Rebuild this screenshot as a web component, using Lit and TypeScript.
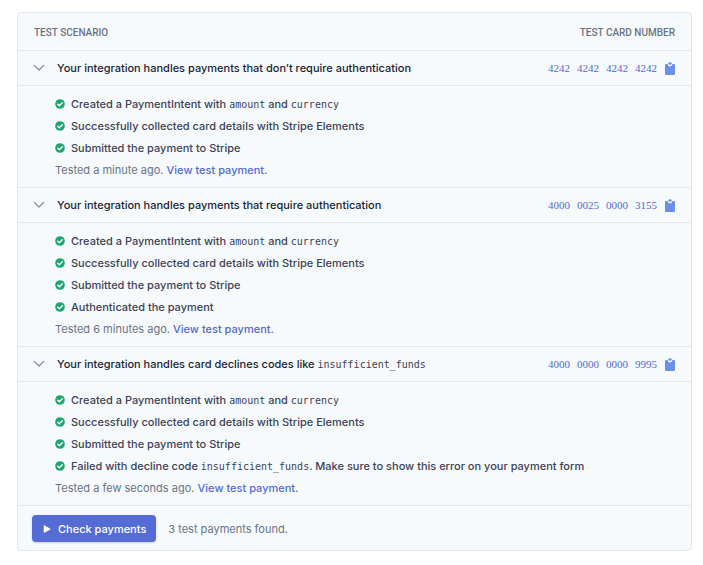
import { LitElement, html, css, svg, nothing, type TemplateResult } from "lit";
import { customElement, state } from "lit/decorators.js";

interface Scenario {
  title: TemplateResult;
  card: string;
  steps: TemplateResult[];
  tested: string;
}

const created = html`Created a PaymentIntent with <code>amount</code> and <code>currency</code>`;
const collected = html`Successfully collected card details with Stripe Elements`;
const submitted = html`Submitted the payment to Stripe`;

const scenarios: Scenario[] = [
  {
    title: html`Your integration handles payments that don’t require authentication`,
    card: "4242 4242 4242 4242",
    steps: [created, collected, submitted],
    tested: "Tested a minute ago.",
  },
  {
    title: html`Your integration handles payments that require authentication`,
    card: "4000 0025 0000 3155",
    steps: [created, collected, submitted, html`Authenticated the payment`],
    tested: "Tested 6 minutes ago.",
  },
  {
    title: html`Your integration handles card declines codes like <code>insufficient_funds</code>`,
    card: "4000 0000 0000 9995",
    steps: [
      created,
      collected,
      submitted,
      html`Failed with decline code <code>insufficient_funds</code>. Make sure to show this error on your payment form`,
    ],
    tested: "Tested a few seconds ago.",
  },
];

const icon = (cls: string, w: number, h: number, body: unknown) =>
  html`<svg class=${cls} width=${w} height=${h} viewBox="0 0 ${w} ${h}" aria-hidden="true">${body}</svg>`;

const chevron = (cls: string) =>
  icon(cls, 12, 8, svg`<path d="M1.5 1.5 6 6l4.5-4.5" fill="none" stroke="#8792a2" stroke-width="1.4" stroke-linecap="round" stroke-linejoin="round"/>`);
const check = icon("check", 10, 10, svg`<circle cx="5" cy="5" r="4.8" fill="#1ea672"/><path d="M2.8 5.2 4.4 6.7 7.3 3.7" fill="none" stroke="#fff" stroke-width="1.3" stroke-linecap="round" stroke-linejoin="round"/>`);
const clipboard = icon("clip", 10, 13, svg`<path d="M1 2h1.6c.2 1.5 1 2.3 2.4 2.3S7.2 3.5 7.4 2H9a1 1 0 0 1 1 1v9a1 1 0 0 1-1 1H1a1 1 0 0 1-1-1V3a1 1 0 0 1 1-1Z" fill="#6c8eef"/><ellipse cx="5" cy="1.5" rx="1.7" ry="1.3" fill="#6c8eef"/>`);
const play = icon("play", 8, 8, svg`<path d="M.7.6v6.8c0 .4.3.5.6.4l6-3.4c.3-.2.3-.5 0-.7l-6-3.5C1 0 .7.2.7.6Z" fill="#fff"/>`);

@customElement("app-root")
export class AppRoot extends LitElement {
  @state() private closed = new Set<number>();

  static styles = css`
    :host {
      display: block;
      padding: 12px 11px 14px 17px;
      background: #fff;
      color: #3c4257;
      font: 11px/22px Inter, sans-serif;
    }
    .card {
      border: 1px solid #e3e8ee;
      border-radius: 4px;
      background: #f7fafc;
      overflow: hidden;
    }
    table {
      width: 100%;
      border-collapse: separate;
      border-spacing: 0;
    }
    th, td {
      padding: 0;
      border-bottom: 1px solid #e3e8ee;
      text-align: left;
      font-weight: 400;
    }
    thead th {
      height: 34px;
      padding: 3px 16px 0;
      color: #697386;
      font-family: Roboto, sans-serif;
      font-size: 10px;
      font-weight: 500;
      text-transform: uppercase;
    }
    th.number, td.number {
      padding-right: 16px;
      text-align: right;
      white-space: nowrap;
    }
    .scenario th, .scenario td { height: 34px; }
    button {
      border: 0;
      padding: 0;
      background: none;
      color: inherit;
      font: inherit;
      cursor: pointer;
    }
    .toggle {
      display: flex;
      align-items: center;
      gap: 12px;
      padding-left: 15px;
      color: #1a1f36;
      font-weight: 500;
      text-align: left;
    }
    .copy {
      display: inline-flex;
      align-items: center;
      gap: 8px;
      color: #5469d4;
      font: 11px/22px "Liberation Serif", serif;
    }
    .digits {
      display: flex;
      gap: 7px;
    }
    svg { flex: none; }
    .folded { transform: rotate(-90deg); }
    code {
      font: 400 10px "DejaVu Sans Mono", monospace;
      color: #3c4257;
    }
    .details { padding: 7px 37px 6px; }
    ul {
      margin: 0;
      padding: 0;
      list-style: none;
    }
    li {
      display: flex;
      align-items: center;
      gap: 6px;
      font-weight: 500;
    }
    .muted {
      margin: 0;
      color: #697386;
    }
    a {
      color: #5469d4;
      font-weight: 500;
      text-decoration: none;
    }
    .footer {
      display: flex;
      align-items: center;
      gap: 12px;
      padding: 9px 14px 8px;
    }
    .primary {
      display: flex;
      align-items: center;
      gap: 7px;
      height: 27px;
      padding: 0 10px 0 11px;
      border-radius: 4px;
      background: #556cd6;
      box-shadow: 0 1px 2px #3c42573d;
      color: #fff;
      font-weight: 500;
    }
  `;

  private toggle(index: number) {
    const next = new Set(this.closed);
    if (!next.delete(index)) next.add(index);
    this.closed = next;
  }

  private renderScenario(s: Scenario, index: number) {
    const open = !this.closed.has(index);
    return html`
      <tbody>
        <tr class="scenario">
          <th scope="row">
            <button class="toggle" aria-expanded=${open} @click=${() => this.toggle(index)}>
              ${chevron(open ? "open" : "folded")}
              <span>${s.title}</span>
            </button>
          </th>
          <td class="number">
            <button class="copy" title="Copy card number" @click=${() => navigator.clipboard?.writeText(s.card)}>
              <span class="digits">${s.card.split(" ").map((group) => html`<span>${group}</span>`)}</span>
              ${clipboard}
            </button>
          </td>
        </tr>
        ${open
          ? html`<tr>
              <td class="details" colspan="2">
                <ul>${s.steps.map((step) => html`<li>${check}<span>${step}</span></li>`)}</ul>
                <p class="muted">${s.tested} <a href="#payment-${index + 1}">View test payment.</a></p>
              </td>
            </tr>`
          : nothing}
      </tbody>
    `;
  }

  render() {
    return html`
      <div class="card">
        <table>
          <thead>
            <tr>
              <th scope="col">Test scenario</th>
              <th scope="col" class="number">Test card number</th>
            </tr>
          </thead>
          ${scenarios.map((s, i) => this.renderScenario(s, i))}
        </table>
        <div class="footer">
          <button class="primary">${play}<span>Check payments</span></button>
          <p class="muted">3 test payments found.</p>
        </div>
      </div>
    `;
  }
}
